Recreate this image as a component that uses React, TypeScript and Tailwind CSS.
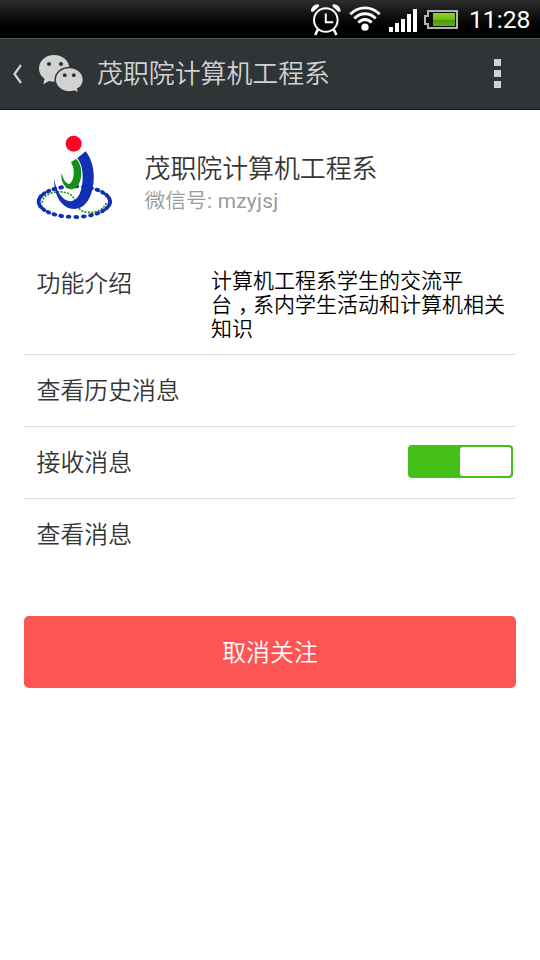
import type { ReactNode } from "react";

const ORBIT_DOTS = 29;

function AlarmIcon() {
  return (
    <svg className="h-[36px] w-[32px]" viewBox="0 0 32 36" fill="none" stroke="#fff">
      <circle cx="15.8" cy="20" r="11.8" strokeWidth="2" />
      <path d="M15.800 13.500v8.800h7.400" strokeWidth="2" />
      <path d="M1 11.400C.800 7.300 4.500 3.900 8.600 4.300L9.200 6.300 3.200 11.800zM30.600 11.400C30.800 7.300 27.100 3.900 23 4.300L22.400 6.300 28.400 11.800z" fill="#fff" stroke="none" />
      <path d="M7.800 29.500 5.200 35M23.800 29.500 26.400 35" strokeWidth="2.600" />
    </svg>
  );
}

function WifiIcon() {
  return (
    <svg className="h-[26px] w-[32px]" viewBox="0 0 32 26" fill="none" stroke="#fff" strokeWidth="2.900">
      <path d="M1.300 9.300Q7.500 2.900 16 2.900T30.700 9.300" />
      <path d="M5.300 13.600Q10 8.700 16 8.700T26.700 13.600" />
      <path d="M9.400 17.600Q12.200 14.500 16 14.500T22.600 17.600" />
      <circle cx="16" cy="22.200" r="3.600" fill="#fff" stroke="none" />
    </svg>
  );
}

function SignalIcon() {
  return (
    <svg className="h-[23px] w-[28px]" viewBox="0 0 28 23" fill="#fff">
      <path d="M0 18h4v5H0zM6 14h4v9H6zM12 10h4v13h-4zM18 5h4v18h-4zM24 0h4v23h-4z" />
    </svg>
  );
}

function BatteryIcon() {
  return (
    <svg className="h-[19px] w-[34px]" viewBox="0 0 34 19">
      <defs>
        <linearGradient id="charge" x1="0" y1="0" x2="0" y2="1">
          <stop offset="0" stopColor="#8fd62c" />
          <stop offset="0.500" stopColor="#6cba17" />
          <stop offset="0.550" stopColor="#4c9a08" />
          <stop offset="1" stopColor="#5fae12" />
        </linearGradient>
      </defs>
      <path d="M4 1h29v17H4v-4H1V6h3z" fill="#0c0c0c" stroke="#b4b4b4" strokeWidth="2" />
      <path d="M9 3h22v13H9z" fill="url(#charge)" />
    </svg>
  );
}

function WeChatIcon() {
  return (
    <svg className="h-[40px] w-[46px]" viewBox="0 0 46 40">
      <path
        d="M16 1C7.500 1 1 7 1 14.500c0 4.300 2 7.800 5.500 10.200L5.300 30.200l5.800-3.200c1.600.5 3.200.7 4.900.7 8.500 0 15.300-5.800 15.300-13.400S24.500 1 16 1z"
        fill="#d2d2d2"
      />
      <path
        d="M31.400 13.500c-7.900 0-14.200 5.400-14.200 12.200s6.300 12.200 14.200 12.200c1.800 0 3.300-.3 4.900-.8l4.700 2.300-1.200-4.400c3.500-2.100 5.600-5.400 5.600-9.300 0-6.800-6.200-12.200-14-12.200z"
        fill="#d2d2d2"
        stroke="#2f3436"
        strokeWidth="1.500"
      />
      <g fill="#2f3436">
        <circle cx="11" cy="10" r="2.100" />
        <circle cx="23" cy="10" r="2.100" />
        <circle cx="26.700" cy="21.200" r="1.900" />
        <circle cx="35.800" cy="21.200" r="1.900" />
      </g>
    </svg>
  );
}

function DepartmentLogo() {
  const dots = Array.from({ length: ORBIT_DOTS }, (_, i) => {
    const t = (i / ORBIT_DOTS) * Math.PI * 2;
    const x = 151 + 107 * Math.cos(t);
    const y = 233 + 46 * Math.sin(t);
    const angle = (Math.atan2(46 * Math.cos(t), -107 * Math.sin(t)) * 180) / Math.PI;
    return { x, y, angle };
  });

  return (
    <svg className="h-[106px] w-[110px] shrink-0" viewBox="0 0 330 318">
      {dots.map((d, i) => (
        <ellipse
          key={i}
          cx={d.x}
          cy={d.y}
          rx="8.500"
          ry="6"
          fill="#1230b4"
          transform={`rotate(${d.angle} ${d.x} ${d.y})`}
        />
      ))}
      <path
        d="M54 236C60 198 125 196 144 216S156 262 190 265 242 252 248 234"
        fill="none"
        stroke="#149018"
        strokeWidth="5"
        strokeDasharray="6 4"
      />
      <path d="M185 82C209 112 214 158 206 192C198 232 178 254 151 255C116 255 88 216 91 165C97 207 118 231 140 232C164 229 174 201 176 166C177 139 172 119 160 103z" fill="#1230b4" />
      <path d="M156 104C173 120 176 151 167 175C160 192 147 199 135 194C119 187 109 170 113 148C118 168 126 179 136 180C149 174 156 139 141 115z" fill="#149018" />
      <circle cx="149" cy="59" r="24" fill="#fb0523" />
    </svg>
  );
}

function StatusBar() {
  return (
    <div className="flex h-[38px] items-start bg-linear-to-b from-[#2d2d2d] to-black pl-[310px] text-white">
      <AlarmIcon />
      <div className="mt-[5px] ml-[7px] h-[26px]">
        <WifiIcon />
      </div>
      <div className="mt-[9px] ml-2">
        <SignalIcon />
      </div>
      <div className="mt-[10px] ml-[7px]">
        <BatteryIcon />
      </div>
      <span className="mt-[4px] ml-[11px] font-[Roboto] text-[24.700px] leading-[32px] font-normal whitespace-nowrap">
        11:28
      </span>
    </div>
  );
}

function TitleBar() {
  return (
    <header className="flex h-[72px] items-center border-t border-b border-t-[#555859] border-b-[#15191b] bg-[#2f3436] text-[#d2d2d2]">
      <svg className="ml-3 h-[20px] w-[11px]" viewBox="0 0 11 20" fill="none" stroke="#d2d2d2" strokeWidth="2.200">
        <path d="M9 1 2.500 10 9 19" />
      </svg>
      <div className="ml-[15px]">
        <WeChatIcon />
      </div>
      <h1 className="ml-[13px] text-[25.900px] leading-[36px]">茂职院计算机工程系</h1>
      <div className="mr-[39px] mb-[2px] ml-auto flex flex-col gap-1">
        <span className="size-[7px] bg-[#d2d2d2]" />
        <span className="size-[7px] bg-[#d2d2d2]" />
        <span className="size-[7px] bg-[#d2d2d2]" />
      </div>
    </header>
  );
}

function Row({ label, children }: { label: string; children?: ReactNode }) {
  return (
    <div className="flex h-[72px] items-center justify-between border-t border-[#dedede] pr-[3px] pl-[12.500px]">
      <span className="pt-[3px] text-[23.900px]">{label}</span>
      {children}
    </div>
  );
}

export default function App() {
  return (
    <main className="h-[960px] w-[540px] overflow-hidden bg-white font-['Roboto','Noto_Sans_CJK_SC',sans-serif] font-[350] text-[#363636]">
      <StatusBar />
      <TitleBar />

      {/* Account */}
      <section className="flex h-[144px] pt-[14px] pl-6">
        <DepartmentLogo />
        <div className="ml-[10.500px] pt-[27px]">
          <h2 className="text-[25.900px] leading-[36px]">茂职院计算机工程系</h2>
          <p className="text-[20.800px] leading-[29px] text-[#9a9a9a]">
            微信号<span className="font-normal tracking-[0.300px]">: mzyjsj</span>
          </p>
        </div>
      </section>

      <div className="mx-6">
        <div className="flex h-[100px] pl-[12.500px]">
          <span className="w-[174.500px] pt-[12px] text-[23.900px] leading-[36px]">功能介绍</span>
          <p className="pt-[15px] text-[21px] leading-[24px] text-black">
            计算机工程系学生的交流平
            <br />台<span className="inline-block w-[21px] pl-[6px] [font-feature-settings:'halt']">，</span>系内学生活动和计算机相关
            <br />
            知识
          </p>
        </div>
        <Row label="查看历史消息" />
        <Row label="接收消息">
          <div className="mb-[2px] flex h-[33px] w-[105px] justify-end rounded-[4px] bg-[#45c01a] p-[2px]">
            <span className="w-[51px] rounded-[3px] bg-white" />
          </div>
        </Row>
        <Row label="查看消息" />
      </div>

      <button className="mx-6 mt-[46px] block h-[72px] w-[492px] rounded-[5px] bg-[#ff5454] pt-[4px] text-[23.900px] text-white">
        取消关注
      </button>
    </main>
  );
}
